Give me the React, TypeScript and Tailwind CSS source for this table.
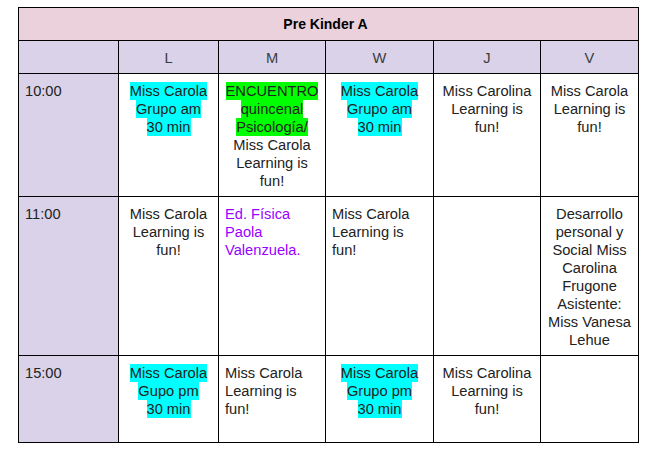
import { Fragment } from 'react';

type Part = { lines: string[]; hl?: 'cyan' | 'green'; purple?: boolean };
type Cell = { parts: Part[]; left?: boolean };

const DAYS = ['L', 'M', 'W', 'J', 'V'];

const learning = (who: string): Part => ({ lines: [who, 'Learning is', 'fun!'] });

const ROWS: { time: string; height: string; cells: Cell[] }[] = [
  {
    time: '10:00',
    height: 'h-[122px]',
    cells: [
      { parts: [{ lines: ['Miss Carola', 'Grupo am', '30 min'], hl: 'cyan' }] },
      {
        parts: [
          { lines: ['ENCUENTRO', 'quincenal', 'Psicología/'], hl: 'green' },
          learning('Miss Carola'),
        ],
      },
      { parts: [{ lines: ['Miss Carola', 'Grupo am', '30 min'], hl: 'cyan' }] },
      { parts: [learning('Miss Carolina')] },
      { parts: [learning('Miss Carola')] },
    ],
  },
  {
    time: '11:00',
    height: 'h-[158px]',
    cells: [
      { parts: [learning('Miss Carola')] },
      { left: true, parts: [{ lines: ['Ed. Física', 'Paola', 'Valenzuela.'], purple: true }] },
      { left: true, parts: [learning('Miss Carola')] },
      { parts: [] },
      {
        parts: [
          {
            lines: [
              'Desarrollo',
              'personal y',
              'Social Miss',
              'Carolina',
              'Frugone',
              'Asistente:',
              'Miss Vanesa',
              'Lehue',
            ],
          },
        ],
      },
    ],
  },
  {
    time: '15:00',
    height: 'h-[86px]',
    cells: [
      { parts: [{ lines: ['Miss Carola', 'Gupo pm', '30 min'], hl: 'cyan' }] },
      { left: true, parts: [learning('Miss Carola')] },
      { parts: [{ lines: ['Miss Carola', 'Grupo pm', '30 min'], hl: 'cyan' }] },
      { parts: [learning('Miss Carolina')] },
      { parts: [] },
    ],
  },
];

function CellBody({ cell }: { cell: Cell }) {
  return (
    <div
      className={`bg-white px-[6px] pt-[8px] text-[14.67px] leading-[18px] text-[#222] ${
        cell.left ? 'text-left' : 'text-center'
      }`}
    >
      {cell.parts.map((part, i) => (
        <Fragment key={i}>
          {part.lines.map((line, j) => (
            <Fragment key={j}>
              <span
                className={
                  part.hl === 'cyan'
                    ? 'bg-[#00ffff] py-[1px]'
                    : part.hl === 'green'
                      ? 'bg-[#00ff00] py-[1px]'
                      : part.purple
                        ? 'text-[#9900ff]'
                        : ''
                }
              >
                {line}
              </span>
              <br />
            </Fragment>
          ))}
        </Fragment>
      ))}
    </div>
  );
}

export default function App() {
  return (
    <div className="min-h-[456px] bg-white pl-[18px] pt-[7px] font-['Liberation_Sans',Arial,sans-serif]">
      <div className="grid w-[621px] grid-cols-[99px_99px_106px_107px_106px_97px] gap-px border border-black bg-black">
        {/* título */}
        <div className="col-span-6 flex h-[32px] items-center justify-center bg-[#ead1dc] pr-[6px] text-[14px] font-bold text-black">
          Pre Kinder A
        </div>

        {/* días */}
        <div className="h-[32px] bg-[#d9d2e9]" />
        {DAYS.map((d) => (
          <div
            key={d}
            className="flex h-[32px] items-center justify-center bg-[#d9d2e9] pt-px text-[14.67px] leading-[18px] text-[#3c3c3c]"
          >
            {d}
          </div>
        ))}

        {/* horario */}
        {ROWS.map((row) => (
          <Fragment key={row.time}>
            <div
              className={`${row.height} bg-[#d9d2e9] px-[6px] pt-[8px] text-[14.67px] leading-[18px] text-[#222]`}
            >
              {row.time}
            </div>
            {row.cells.map((cell, i) => (
              <CellBody key={i} cell={cell} />
            ))}
          </Fragment>
        ))}
      </div>
    </div>
  );
}
